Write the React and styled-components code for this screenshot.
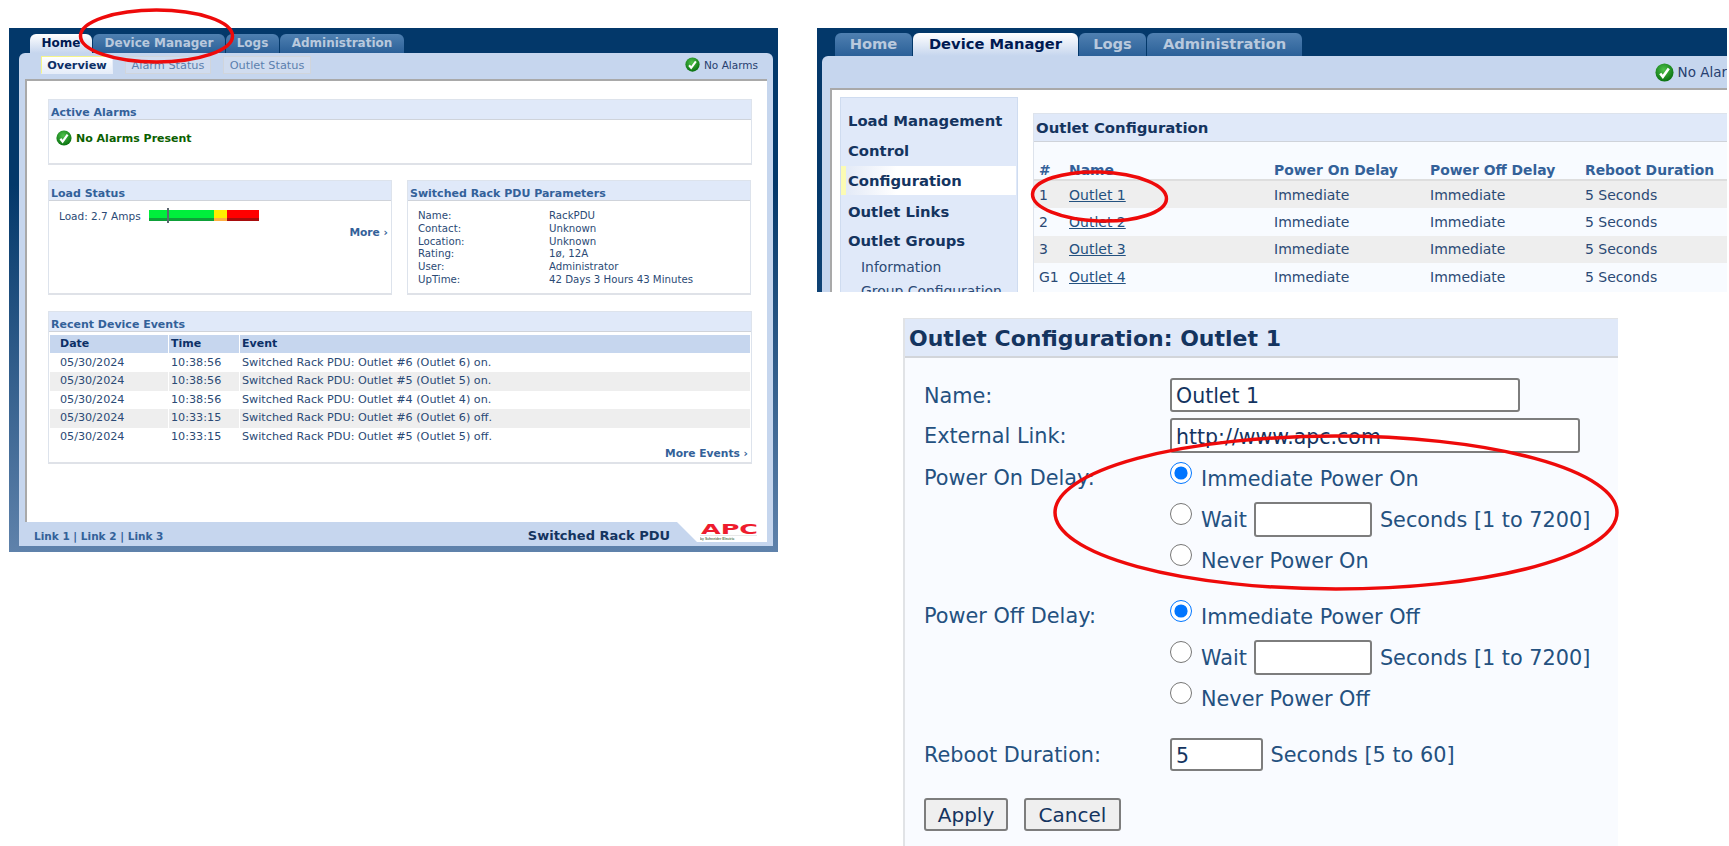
import React from 'react'
import styled, { createGlobalStyle } from 'styled-components'

const GlobalStyle = createGlobalStyle`
  html, body {
    margin: 0;
    background: #fff;
    font-family: 'DejaVu Sans', Verdana, sans-serif;
  }
`

const Page = styled.div`
  position: relative;
  display: flex;
  align-items: flex-start;
  width: 1729px;
  height: 846px;
  overflow: hidden;
  background: #fff;
`
const Markup = styled.svg`
  position: absolute;
  left: 0;
  top: 0;
  pointer-events: none;
`
const LeftColumn = styled.div`
  margin: 28px 0 0 9px;
`
const RightColumn = styled.div`
  margin-left: 39px;
  padding-top: 28px;
  width: 910px;
`

/* shell of the web ui, $big is the zoomed-in copy */
const Shell = styled.div`
  width: ${p => (p.$big ? '910px' : '769px')};
  height: ${p => (p.$big ? '264px' : '524px')};
  overflow: hidden;
  padding-top: ${p => (p.$big ? '5px' : '6px')};
  box-sizing: border-box;
  background: ${p => (p.$big
    ? 'linear-gradient(#03386a 60%, #0e4274)'
    : 'linear-gradient(#03386a 30%, #5f82ab)')};
`
const Tabs = styled.div`
  display: flex;
  gap: 1px;
  margin-left: ${p => (p.$big ? '18px' : '21px')};
`
const Tab = styled.div`
  width: ${p => p.$w}px;
  height: ${p => (p.$big ? '23px' : '19px')};
  line-height: ${p => (p.$big ? '21px' : '19px')};
  box-sizing: border-box;
  text-align: center;
  border-radius: 6px 6px 0 0;
  font-size: ${p => (p.$big ? '14.7px' : '12px')};
  font-weight: bold;
  color: ${p => (p.$active ? '#001a52' : '#b9c9dd')};
  background: ${p => (p.$active
    ? 'linear-gradient(#ffffff, #c6d6ee)'
    : 'linear-gradient(#4f80b1, #2b6098)')};
`
const Body = styled.div`
  width: ${p => (p.$big ? '930px' : '754px')};
  margin-left: ${p => (p.$big ? '5px' : '10px')};
  background: #c6d6ee;
  border-radius: 6px 6px 0 0;
`
const SubBar = styled.div`
  display: flex;
  align-items: center;
  gap: 12px;
  height: ${p => (p.$big ? '32px' : '26px')};
  padding: ${p => (p.$big ? '0 5px 0 0' : '0 15px 3px 22px')};
  box-sizing: border-box;
`
const SubTab = styled.div`
  width: ${p => p.$w}px;
  height: 18px;
  line-height: 17px;
  box-sizing: border-box;
  text-align: center;
  font-size: 11.3px;
  font-weight: ${p => (p.$active ? 'bold' : 'normal')};
  color: ${p => (p.$active ? '#0c2f66' : '#5b7fae')};
  background: ${p => (p.$active ? 'linear-gradient(#ffffff, #e6edf9)' : '#d0dcef')};
  border: 1px solid ${p => (p.$active ? '#f5f58a' : '#d0d5dc')};
  border-right-color: ${p => (p.$active ? '#e6edf9' : '#d0d5dc')};
  border-bottom-color: ${p => (p.$active ? '#e6edf9' : '#d0d5dc')};
`
const Status = styled.div`
  display: flex;
  align-items: center;
  gap: 4px;
  margin-left: auto;
  font-size: ${p => (p.$big ? '13.5px' : '10.5px')};
  color: #26406f;
`
const Content = styled.div`
  height: ${p => (p.$big ? '210px' : '443px')};
  margin: 0 6px 0 ${p => (p.$big ? '8px' : '6px')};
  padding: ${p => (p.$big ? '7px 0 0 8px' : '18px 15px 0 21px')};
  box-sizing: border-box;
  background: #fff;
  border-top: 2px solid #a9a9a9;
  border-left: 2px solid #a9a9a9;
  overflow: hidden;
  ${p => p.$big && 'display: flex; gap: 15px;'}
`

/* overview panels */
const Box = styled.section`
  height: ${p => p.$h}px;
  margin-bottom: ${p => p.$mb || 0}px;
  box-sizing: border-box;
  border: 1px solid #dde3ec;
  border-right-width: 1.5px;
  border-bottom: 2px solid #dfe2e8;
`
const BoxTitle = styled.h2`
  margin: 0;
  height: 20px;
  padding: 5px 0 0 2px;
  box-sizing: border-box;
  font-size: 11px;
  line-height: 15px;
  font-weight: bold;
  color: #336199;
  background: #e0e9f9;
  border-bottom: 1px solid #cfd3da;
`
const AlarmLine = styled.div`
  display: flex;
  align-items: center;
  gap: 4px;
  padding: 10px 0 0 7px;
  font-size: 11px;
  font-weight: bold;
  color: #0b6000;
`
const TwoUp = styled.div`
  display: grid;
  grid-template-columns: 344px 344px;
  gap: 15px;
  margin-bottom: 16px;
`
const LoadRow = styled.div`
  display: flex;
  align-items: center;
  height: 13px;
  margin: 8px 0 0 10px;
  font-size: 10.5px;
  color: #2b4a75;
`
const LoadLabel = styled.span`
  width: 90px;
`
const Meter = styled.div`
  position: relative;
  display: flex;
  width: 110px;
  height: 11px;
`
const MeterPart = styled.div`
  width: ${p => p.$w}px;
  background: linear-gradient(${p => p.$top} 72%, ${p => p.$low} 72%);
`
const Needle = styled.div`
  position: absolute;
  left: 18px;
  top: -2px;
  width: 2px;
  height: 15px;
  background: #5c6670;
`
const MoreLink = styled.div`
  height: 13px;
  margin-top: ${p => p.$mt}px;
  padding-right: 3px;
  text-align: right;
  font-size: 10.7px;
  line-height: 13px;
  font-weight: bold;
  color: #336199;
`
const ParamList = styled.div`
  display: grid;
  grid-template-columns: 131px 1fr;
  grid-auto-rows: 12.8px;
  padding: 9px 0 0 10px;
  font-size: 10.2px;
  line-height: 12.8px;
  color: #2b4a75;
`
const EventHead = styled.div`
  display: grid;
  grid-template-columns: 118px 70px 1fr;
  gap: 1px;
  height: 18px;
  margin: 3px 1px 1px;
  line-height: 18px;
  font-size: 11px;
  font-weight: bold;
  color: #0c2f66;
  & > span {
    padding-left: 10px;
    background: #c6d6ee;
  }
  & > span + span {
    padding-left: 2px;
  }
`
const EventRow = styled.div`
  display: grid;
  grid-template-columns: 118px 70px 1fr;
  gap: 1px;
  height: 18.4px;
  margin: 0 1px;
  line-height: 18.4px;
  font-size: 11.2px;
  color: #2b4a75;
  & > span {
    padding-left: 10px;
    background: ${p => (p.$alt ? '#eeeeee' : 'transparent')};
  }
  & > span + span {
    padding-left: 2px;
  }
`

/* footer */
const Footer = styled.div`
  display: flex;
  height: 24px;
  padding-left: 15px;
`
const FooterLinks = styled.div`
  flex: 1;
  padding-top: 8px;
  font-size: 10.5px;
  line-height: 13px;
  font-weight: bold;
  color: #336199;
`
const Product = styled.div`
  padding: 6px 7px 0 0;
  font-size: 13px;
  line-height: 16px;
  font-weight: bold;
  color: #14345f;
`
const Notch = styled.div`
  width: 90px;
  height: 20px;
  margin-right: 6px;
  padding-left: 23px;
  box-sizing: border-box;
  background: #fff;
  clip-path: polygon(0 0, 100% 0, 100% 100%, 20px 100%);
`

/* device manager copy */
const SideNav = styled.nav`
  flex: none;
  width: 178px;
  height: 220px;
  padding-top: 8px;
  box-sizing: border-box;
  background: #e0e9f9;
  border: 1px solid #cfdcf0;
  border-bottom: 0;
`
const NavItem = styled.div`
  height: ${p => p.$h || 30}px;
  line-height: ${p => p.$h || 30}px;
  padding-left: 7px;
  font-size: 14.8px;
  font-weight: bold;
  color: #14345f;
  ${p => p.$active && `
    margin: 0 1px 2px 0;
    padding-left: 2px;
    border-left: 5px solid #fbfbb4;
    background: linear-gradient(90deg, #e3eaf7, #ffffff 30%);
  `}
`
const NavSub = styled.div`
  height: 24px;
  line-height: 24px;
  padding-left: 20px;
  font-size: 13.9px;
  color: #2b4a75;
`
const ConfigBox = styled.section`
  flex: 1;
  margin-top: 16px;
  background: #f8fbff;
  border-left: 1px solid #dde3ec;
  border-top: 1px solid #dde3ec;
`
const ConfigTitle = styled.h2`
  margin: 0;
  height: 28px;
  padding-left: 2px;
  line-height: 28px;
  font-size: 14.9px;
  font-weight: bold;
  color: #14345f;
  background: #e0e9f9;
  border-bottom: 1px solid #cfd3da;
  box-sizing: border-box;
`
const ConfigGrid = styled.div`
  display: grid;
  grid-template-columns: 30px 205px 156px 155px 1fr;
  align-items: center;
  padding-left: 5px;
  font-size: 14px;
  height: ${p => (p.$head ? '39px' : '27.4px')};
  color: ${p => (p.$head ? '#336199' : '#2b4a75')};
  font-weight: ${p => (p.$head ? 'bold' : 'normal')};
  background: ${p => (p.$alt ? '#eeeeee' : 'transparent')};
  ${p => p.$head && 'font-size: 13.9px; padding-top: 18px; box-sizing: border-box; border-bottom: 2px solid #dedede;'}
`
const OutletLink = styled.a`
  color: #24517f;
  text-decoration: underline;
`

/* outlet form */
const FormPanel = styled.div`
  width: 715px;
  height: 528px;
  margin: 26px 0 0 86px;
  box-sizing: border-box;
  background: #f9fbff;
  border-left: 2px solid #e1e3e6;
  border-top: 1px solid #e1e3e6;
`
const FormTitle = styled.h1`
  margin: 0;
  height: 39px;
  padding-left: 4px;
  box-sizing: border-box;
  line-height: 40px;
  font-size: 22px;
  font-weight: bold;
  color: #14345f;
  background: #e0e9f9;
  border-bottom: 2px solid #d2d5da;
`
const FormBody = styled.form`
  padding: 20px 0 0 19px;
  font-size: 20.8px;
  color: #24517f;
`
const FieldRow = styled.div`
  display: grid;
  grid-template-columns: 246px 1fr;
  align-items: ${p => (p.$top ? 'start' : 'center')};
  margin-top: ${p => p.$mt || 0}px;
  & > label {
    line-height: ${p => (p.$top ? '41px' : 'normal')};
    padding-top: ${p => (p.$top ? 0 : 1)}px;
  }
`
const TextBox = styled.input`
  display: block;
  width: ${p => p.$w}px;
  height: ${p => p.$h || 34}px;
  box-sizing: border-box;
  padding: 2px 4px 0;
  border: 2px solid #7d7d7d;
  border-radius: 3px;
  background: #fff;
  font-family: inherit;
  font-size: 20.5px;
  color: #14345f;
`
const Option = styled.label`
  display: flex;
  align-items: center;
  height: 41px;
`
const Radio = styled.input`
  flex: none;
  width: 22px;
  height: 22px;
  margin: 0 9px 12px 0;
`
const Inline = styled.div`
  display: flex;
  align-items: center;
  gap: 7.5px;
`
const Buttons = styled.div`
  display: flex;
  gap: 16px;
  margin-top: 27px;
`
const Button = styled.button`
  width: ${p => p.$w}px;
  height: 33px;
  padding: 1px 0 0;
  border: 2px solid #7d7d7d;
  border-radius: 3px;
  background: #efefef;
  font-family: inherit;
  font-size: 20px;
  color: #14345f;
`

function OkIcon({ size }) {
  return (
    <svg width={size} height={size} viewBox="0 0 16 16">
      <defs>
        <radialGradient id="okBall" cx="0.45" cy="0.35" r="0.7">
          <stop offset="0" stopColor="#4fc24a" />
          <stop offset="1" stopColor="#046b0c" />
        </radialGradient>
      </defs>
      <circle cx="8" cy="8" r="7.6" fill="url(#okBall)" />
      <path d="M4.4 8.8 L6.6 11.6 L11.6 4.6" fill="none" stroke="#fff" strokeWidth="2.2" />
    </svg>
  )
}

function ApcLogo() {
  return (
    <svg width="60" height="20" viewBox="0 0 60 20">
      <text x="1" y="12" textLength="57" lengthAdjust="spacingAndGlyphs" fontFamily="'DejaVu Sans', sans-serif"
        fontWeight="bold" fontSize="14" fill="#ee1c2e">APC</text>
      <rect x="0" y="13" width="57" height="1" fill="#e8e8e8" />
      <text x="0" y="18" fontFamily="'Liberation Sans', sans-serif" fontSize="3.4" fontWeight="bold" fill="#5a7a5a">by Schneider Electric</text>
    </svg>
  )
}

const events = [
  ['10:38:56', 'Switched Rack PDU: Outlet #6 (Outlet 6) on.'],
  ['10:38:56', 'Switched Rack PDU: Outlet #5 (Outlet 5) on.'],
  ['10:38:56', 'Switched Rack PDU: Outlet #4 (Outlet 4) on.'],
  ['10:33:15', 'Switched Rack PDU: Outlet #6 (Outlet 6) off.'],
  ['10:33:15', 'Switched Rack PDU: Outlet #5 (Outlet 5) off.'],
]

const params = [
  ['Name:', 'RackPDU'],
  ['Contact:', 'Unknown'],
  ['Location:', 'Unknown'],
  ['Rating:', '1ø, 12A'],
  ['User:', 'Administrator'],
  ['UpTime:', '42 Days 3 Hours 43 Minutes'],
]

const outlets = [
  ['1', 'Outlet 1'],
  ['2', 'Outlet 2'],
  ['3', 'Outlet 3'],
  ['G1', 'Outlet 4'],
]

function Overview() {
  return (
    <Shell>
      <Tabs>
        <Tab $w={62} $active>Home</Tab>
        <Tab $w={132}>Device Manager</Tab>
        <Tab $w={53}>Logs</Tab>
        <Tab $w={124}>Administration</Tab>
      </Tabs>
      <Body>
        <SubBar>
          <SubTab $w={72} $active>Overview</SubTab>
          <SubTab $w={86}>Alarm Status</SubTab>
          <SubTab $w={88}>Outlet Status</SubTab>
          <Status><OkIcon size={15} />No Alarms</Status>
        </SubBar>
        <Content>
          <Box $h={66} $mb={15}>
            <BoxTitle>Active Alarms</BoxTitle>
            <AlarmLine><OkIcon size={16} />No Alarms Present</AlarmLine>
          </Box>
          <TwoUp>
            <Box $h={115}>
              <BoxTitle>Load Status</BoxTitle>
              <LoadRow>
                <LoadLabel>Load: 2.7 Amps</LoadLabel>
                <Meter>
                  <MeterPart $w={66} $top="#00ee3c" $low="#0da038" />
                  <MeterPart $w={13} $top="#ffee00" $low="#ffb040" />
                  <MeterPart $w={32} $top="#ff0000" $low="#a80c0c" />
                  <Needle />
                </Meter>
              </LoadRow>
              <MoreLink $mt={4}>More ›</MoreLink>
            </Box>
            <Box $h={115}>
              <BoxTitle>Switched Rack PDU Parameters</BoxTitle>
              <ParamList>
                {params.map(([k, v]) => (
                  <React.Fragment key={k}><span>{k}</span><span>{v}</span></React.Fragment>
                ))}
              </ParamList>
            </Box>
          </TwoUp>
          <Box $h={153}>
            <BoxTitle>Recent Device Events</BoxTitle>
            <EventHead><span>Date</span><span>Time</span><span>Event</span></EventHead>
            {events.map(([time, text], i) => (
              <EventRow key={i} $alt={i % 2 === 1}>
                <span>05/30/2024</span><span>{time}</span><span>{text}</span>
              </EventRow>
            ))}
            <MoreLink $mt={1}>More Events ›</MoreLink>
          </Box>
        </Content>
        <Footer>
          <FooterLinks>Link 1 | Link 2 | Link 3</FooterLinks>
          <Product>Switched Rack PDU</Product>
          <Notch><ApcLogo /></Notch>
        </Footer>
      </Body>
    </Shell>
  )
}

function DeviceManager() {
  return (
    <Shell $big>
      <Tabs $big>
        <Tab $big $w={77}>Home</Tab>
        <Tab $big $w={165} $active>Device Manager</Tab>
        <Tab $big $w={67}>Logs</Tab>
        <Tab $big $w={155}>Administration</Tab>
      </Tabs>
      <Body $big>
        <SubBar $big>
          <Status $big><OkIcon size={19} />No Alarms</Status>
        </SubBar>
        <Content $big>
          <SideNav>
            <NavItem>Load Management</NavItem>
            <NavItem>Control</NavItem>
            <NavItem $active $h={29}>Configuration</NavItem>
            <NavItem>Outlet Links</NavItem>
            <NavItem $h={28}>Outlet Groups</NavItem>
            <NavSub>Information</NavSub>
            <NavSub>Group Configuration</NavSub>
          </SideNav>
          <ConfigBox>
            <ConfigTitle>Outlet Configuration</ConfigTitle>
            <ConfigGrid $head>
              <span>#</span><span>Name</span><span>Power On Delay</span><span>Power Off Delay</span><span>Reboot Duration</span>
            </ConfigGrid>
            {outlets.map(([id, name], i) => (
              <ConfigGrid key={id} $alt={i % 2 === 0}>
                <span>{id}</span>
                <span><OutletLink href="#outlet">{name}</OutletLink></span>
                <span>Immediate</span><span>Immediate</span><span>5 Seconds</span>
              </ConfigGrid>
            ))}
          </ConfigBox>
        </Content>
      </Body>
    </Shell>
  )
}

function DelayField({ title, group, noun }) {
  return (
    <FieldRow $top $mt={group === 'on' ? 5 : 15}>
      <label>{title}</label>
      <div>
        <Option><Radio type="radio" name={group} defaultChecked />Immediate Power {noun}</Option>
        <Option>
          <Radio type="radio" name={group} />
          <Inline>Wait <TextBox $w={118} $h={35} aria-label="seconds" /> Seconds [1 to 7200]</Inline>
        </Option>
        <Option><Radio type="radio" name={group} />Never Power {noun}</Option>
      </div>
    </FieldRow>
  )
}

function OutletForm() {
  return (
    <FormPanel>
      <FormTitle>Outlet Configuration: Outlet 1</FormTitle>
      <FormBody>
        <FieldRow>
          <label>Name:</label>
          <TextBox $w={350} defaultValue="Outlet 1" />
        </FieldRow>
        <FieldRow $mt={6}>
          <label>External Link:</label>
          <TextBox $w={410} $h={35} defaultValue="http://www.apc.com" />
        </FieldRow>
        <DelayField title="Power On Delay:" group="on" noun="On" />
        <DelayField title="Power Off Delay:" group="off" noun="Off" />
        <FieldRow $mt={19}>
          <label>Reboot Duration:</label>
          <Inline>
            <TextBox $w={93} $h={33} defaultValue="5" />
            Seconds [5 to 60]
          </Inline>
        </FieldRow>
        <Buttons>
          <Button type="button" $w={84}>Apply</Button>
          <Button type="button" $w={97}>Cancel</Button>
        </Buttons>
      </FormBody>
    </FormPanel>
  )
}

export default function App() {
  return (
    <Page>
      <GlobalStyle />
      <LeftColumn>
        <Overview />
      </LeftColumn>
      <RightColumn>
        <DeviceManager />
        <OutletForm />
      </RightColumn>
      <Markup width="1729" height="846" viewBox="0 0 1729 846" fill="none" stroke="#ee0a0a" strokeWidth="3.5">
        <ellipse cx="156.5" cy="36" rx="76" ry="26" />
        <ellipse cx="1099.5" cy="196.5" rx="67" ry="24.5" transform="rotate(2 1099.5 196.5)" />
        <ellipse cx="1336" cy="512.5" rx="281" ry="76.5" />
      </Markup>
    </Page>
  )
}
